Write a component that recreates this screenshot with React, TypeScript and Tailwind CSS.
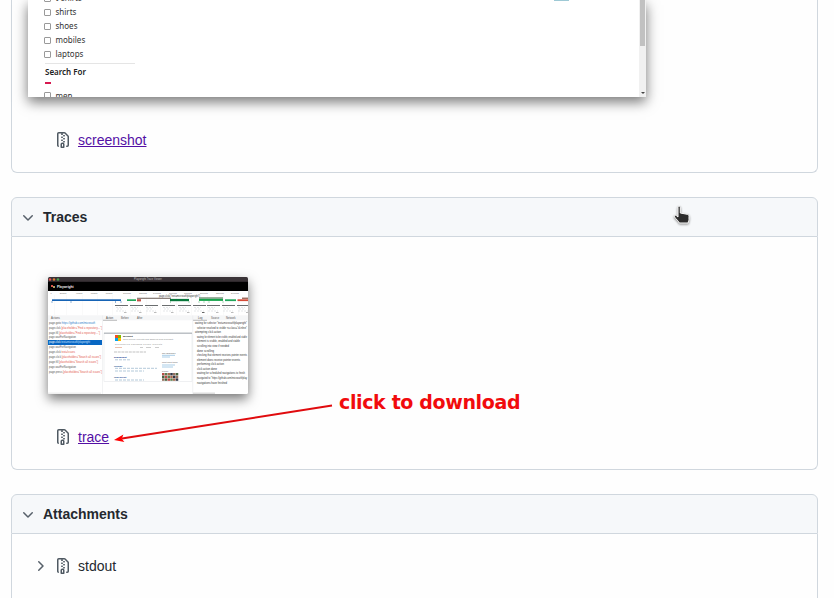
import type { ReactNode } from "react";

function Chevron({ right = false }: { right?: boolean }) {
  return (
    <svg viewBox="0 0 16 16" className="size-4 shrink-0 fill-[#57606a]">
      {right ? (
        <path d="M6.22 3.22a.75.75 0 011.06 0l4.25 4.25a.75.75 0 010 1.06l-4.25 4.25a.75.75 0 01-1.06-1.06L9.94 8 6.22 4.28a.75.75 0 010-1.06z" />
      ) : (
        <path d="M12.78 6.22a.75.75 0 010 1.06l-4.25 4.25a.75.75 0 01-1.06 0L3.22 7.28a.75.75 0 011.06-1.06L8 9.94l3.72-3.72a.75.75 0 011.06 0z" />
      )}
    </svg>
  );
}

function ZipIcon() {
  return (
    <svg viewBox="0 0 16 16" className="size-4 shrink-0 fill-[#4f5962]" fillRule="evenodd">
      <path d="M3.5 1.75a.25.25 0 01.25-.25h3a.75.75 0 000 1.5h.5a.75.75 0 000-1.5h2.086a.25.25 0 01.177.073l2.914 2.914a.25.25 0 01.073.177v8.586a.25.25 0 01-.25.25h-.5a.75.75 0 000 1.5h.5A1.75 1.75 0 0014 13.25V4.664c0-.464-.184-.909-.513-1.237L10.573.513A1.75 1.75 0 009.336 0H3.75A1.75 1.75 0 002 1.75v11.5c0 .649.353 1.214.874 1.515a.75.75 0 10.752-1.298.25.25 0 01-.126-.217V1.75zM8.75 3a.75.75 0 000 1.5h.5a.75.75 0 000-1.5h-.5zM6 5.25a.75.75 0 01.75-.75h.5a.75.75 0 010 1.5h-.5A.75.75 0 016 5.25zm2 1.5A.75.75 0 018.75 6h.5a.75.75 0 010 1.5h-.5A.75.75 0 018 6.75zm-1.25.75a.75.75 0 000 1.5h.5a.75.75 0 000-1.5h-.5zM8 9.75A.75.75 0 018.75 9h.5a.75.75 0 010 1.5h-.5A.75.75 0 018 9.75zm-.75.75a1.75 1.75 0 00-1.75 1.75v3c0 .414.336.75.75.75h2.5a.75.75 0 00.75-.75v-3a1.75 1.75 0 00-1.75-1.75h-.5zM7 12.25a.25.25 0 01.25-.25h.5a.25.25 0 01.25.25v2.25H7v-2.25z" />
    </svg>
  );
}

function CardHeader({ title }: { title: string }) {
  return (
    <div className="flex h-10 items-center gap-[7px] rounded-t-md border border-[#d0d7de] bg-[#f6f8fa] pl-2 font-bold">
      <Chevron />
      {title}
    </div>
  );
}

function FileLink({ children }: { children: ReactNode }) {
  return (
    <div className="flex h-6 items-center gap-[7px] pl-[43px]">
      <ZipIcon />
      <a className="text-[#5410a5] underline">{children}</a>
    </div>
  );
}

function CheckRow({ label }: { label: string }) {
  return (
    <div className="flex h-3.5 items-center gap-[4.5px]">
      <span className="size-[7px] shrink-0 rounded-[1px] border border-[#999]" />
      <span className="text-[8px] leading-[14px] text-[#333]">{label}</span>
    </div>
  );
}

function ShopShot() {
  return (
    <div className="flex h-[97px] w-[618px] justify-between overflow-hidden bg-white font-['Noto_Sans',sans-serif] shadow-[0_5px_12px_0_#777]">
      <div className="-mt-[9px] ml-4 w-[91px]">
        <CheckRow label="t-shirts" />
        <CheckRow label="shirts" />
        <CheckRow label="shoes" />
        <CheckRow label="mobiles" />
        <CheckRow label="laptops" />
        <div className="mt-[2px] ml-px border-t border-[#e5e5e5] pt-[2px] text-[8px] font-semibold leading-3 text-[#222]">
          Search For
        </div>
        <div className="mt-[4px] mb-[4.5px] ml-px h-[2px] w-[6px] bg-[#d71950]" />
        <CheckRow label="men" />
      </div>
      <div className="flex">
        <div className="mr-[70px] h-px w-[15px] bg-[#9ec9d5]" />
        <div className="flex w-[7px] flex-col items-center justify-between bg-[#f1f1f1]">
          <div className="h-[46px] w-[5px] bg-[#c1c1c1]" />
          <div className="mb-[3px] border-x-2 border-t-2 border-x-transparent border-t-[#444]" />
        </div>
      </div>
    </div>
  );
}

const steps = [
  ["page.goto", "https://github.com/microsoft", "#2878c8", 46],
  ["page.click", "[placeholder=\"Find a repository…\"]", "#e45b50", 53],
  ["page.fill", "[placeholder=\"Find a repository…\"]", "#e45b50", 51],
  ["page.waitForNavigation", "", "#555", 27],
  ["page.click", "text=microsoft/playwright", "#c8e0ff", 41],
  ["page.waitForNavigation", "", "#555", 27],
  ["page.click", "text=Issues", "#e45b50", 26],
  ["page.click", "[placeholder=\"Search all issues\"]", "#e45b50", 52],
  ["page.fill", "[placeholder=\"Search all issues\"]", "#e45b50", 49],
  ["page.waitForNavigation", "", "#555", 27],
  ["page.press", "[placeholder=\"Search all issues\"]", "#e45b50", 53],
] as const;

const logs: [string, number, number][] = [
  ["waiting for selector \"text=microsoft/playwright\"", 147, 52],
  ["selector resolved to visible <a class=\"d-inline\"", 149, 50],
  ["attempting click action", 147, 26],
  ["waiting for element to be visible, enabled and stable", 149, 50],
  ["element is visible, enabled and stable", 149, 43],
  ["scrolling into view if needed", 149, 32],
  ["done scrolling", 149, 17],
  ["checking that element receives pointer events", 149, 50],
  ["element does receive pointer events", 149, 43],
  ["performing click action", 149, 27],
  ["click action done", 149, 20],
  ["waiting for scheduled navigations to finish", 149, 48],
  ["navigated to \"https://github.com/microsoft/play", 149, 50],
  ["navigations have finished", 149, 30],
];

const faces = ["#b84c46", "#48633f", "#94705f", "#303747", "#a66a4f", "#5f7e50"];

function TracePreview() {
  return (
    <svg viewBox="0 0 200 117" className="block h-[117px] w-[200px] rounded-[1.5px] bg-white font-['Liberation_Sans',sans-serif] shadow-[0_5px_12px_0_#777]">
      <rect width="200" height="5" fill="#3a3337" />
      <circle cx="2" cy="2.5" r="1.2" fill="#e85454" />
      <circle cx="6" cy="2.5" r="1.2" fill="#dc7b35" />
      <circle cx="10" cy="2.5" r="1.2" fill="#45a34b" />
      <text x="100" y="3.4" fill="#bbb" fontSize="2.6" textAnchor="middle">Playwright Trace Viewer</text>
      <rect y="4.8" width="200" height="9.2" fill="#000" />
      <path d="M3 8h2v2H3z" fill="#d65348" />
      <path d="M5 9h2v2H5z" fill="#a99c62" />
      <text x="9" y="10.5" fill="#eee" fontSize="3.3" fontWeight="bold">Playwright</text>
      {[3, 15, 31, 46, 61, 79, 95, 109, 125, 140, 156, 172, 187].map((x, i) => (
        <g key={x}>
          <text x={x} y="16.7" fontSize="2.2" fill="#666" textAnchor="middle">{i ? `${i * 200}ms` : "0"}</text>
          <rect x={x + 3} y="18" width=".3" height="20" fill="#eee" />
        </g>
      ))}
      <text x="111" y="20" fontSize="2.6" fill="#333" textLength="41" lengthAdjust="spacingAndGlyphs">page.click("text=microsoft/playwright")</text>
      <rect x="4" y="22.3" width="69" height="1.7" fill="#1764b5" />
      <path d="M4 24v2M23 24v2M67.5 24v2M73 24v2" stroke="#4480bd" strokeWidth=".6" />
      <rect x="79" y="22.3" width="9" height="1.7" fill="#24a65a" />
      <rect x="89" y="20.7" width="34" height="1.3" fill="#8d817b" />
      <rect x="89" y="22.2" width="4" height="2.2" fill="#c35045" />
      <rect x="122" y="21.9" width="19" height="2.3" fill="#08773b" />
      <rect x="151" y="20.4" width="24" height="1.2" fill="#607c63" />
      <rect x="151" y="21.8" width="24" height="2.1" fill="#16a34a" />
      <path d="M122.5 24v2M141 24v2M151 24v2M156 24v2M161 24v2M175 24v2" stroke="#5eb27b" strokeWidth=".5" />
      <rect x="177" y="22.3" width="11" height="1.8" fill="#21a55b" />
      <rect x="189.5" y="22.3" width="10.5" height="1.8" fill="#d44a37" />
      <rect x="194" y="20.6" width="6" height="1.3" fill="#946051" />
      {[67, 82, 97, 114, 130, 145, 159, 174, 189].map((x, i) => (
        <g key={x}>
          <rect x={x} y="28.1" width="13" height=".8" fill="#45484b" />
          <path d={`M${x + 1} 30.5h7M${x + 2} 32h5M${x + 1} 34h10`} stroke="#d4d7da" strokeWidth=".6" strokeDasharray="2 1" />
          <rect x={x + 9} y="35" width="2.5" height="1" fill={i === 5 ? "#666" : "#bbb"} />
        </g>
      ))}
      <rect y="38.3" width="200" height="5" fill="#f5f6f7" />
      <text x="3" y="41.7" fontSize="2.7" fill="#555">Actions</text>
      <text x="58" y="41.7" fontSize="2.6" fill="#444">Action</text>
      <text x="73" y="41.7" fontSize="2.6" fill="#555">Before</text>
      <text x="89" y="41.7" fontSize="2.6" fill="#555">After</text>
      <text x="150" y="41.7" fontSize="2.6" fill="#444">Log</text>
      <text x="163" y="41.7" fontSize="2.6" fill="#555">Source</text>
      <text x="178" y="41.7" fontSize="2.6" fill="#555">Network</text>
      <path d="M55 43.3h14M145 43.3h14" stroke="#777" strokeWidth=".5" />
      <path d="M54.5 38.5v78.5M144.7 38.5v78.5" stroke="#e9ebed" strokeWidth=".6" />
      <rect y="63" width="54" height="5" fill="#0867c3" />
      {steps.map(([action, target, color, width], i) => (
        <text key={i} x="1" y={46.6 + i * 4.95} fontSize="2.7" fill={i === 4 ? "#fff" : "#555"} textLength={width} lengthAdjust="spacingAndGlyphs">
          {action} <tspan fill={color}>{target}</tspan>
        </text>
      ))}
      <rect x="56" y="56" width="88" height="48.5" fill="#fff" stroke="#e5e7e9" strokeWidth=".6" />
      <path d="M56 56.2h88" stroke="#808890" strokeWidth=".7" />
      <path d="M67 58h3v3h-3z" fill="#f25022" />
      <path d="M70 58h3v3h-3z" fill="#7fba00" />
      <path d="M67 61h3v3h-3z" fill="#00a4ef" />
      <path d="M70 61h3v3h-3z" fill="#ffb900" />
      <text x="75" y="60" fontSize="2.2" fontWeight="bold" fill="#222">Microsoft</text>
      <text x="75" y="63.4" fontSize="2" fill="#777" textLength="50">Open source projects and samples from Microsoft</text>
      <text x="67" y="67.6" fontSize="2" fill="#777" textLength="47">Repositories  Packages  People  Projects</text>
      <path d="M92 70.5h3M98 70.5h5M107 70.5h4" stroke="#aaa" strokeWidth=".6" />
      <path d="M67 70.5h7" stroke="#df9579" strokeWidth=".6" />
      <path d="M66 75h32" stroke="#999" strokeWidth=".6" strokeDasharray="3 .7" />
      <text x="66" y="81.1" fontSize="2.5" fontWeight="bold" fill="#13398c">playwright</text>
      {[82.8, 91.3, 94, 103].map((y, i) => (
        <path key={y} d={`M67 ${y}h${i === 0 ? 15 : i === 1 ? 42 : 29}`} stroke="#82a4bf" strokeWidth=".6" strokeDasharray="3 1" />
      ))}
      <text x="66" y="89.5" fontSize="2.4" fontWeight="bold" fill="#164d91">vscode</text>
      <text x="66" y="100.5" fontSize="2.4" fontWeight="bold" fill="#164d91">TypeScript</text>
      <text x="114" y="76.5" fontSize="2.1" fill="#555">Top languages</text>
      <path d="M114 78.3h13M114 80h8M114 88h13M114 90h11" stroke="#85b7dd" strokeWidth=".7" />
      <text x="114" y="86.3" fontSize="2.1" fill="#555">Most used topics</text>
      <text x="114" y="95" fontSize="2.1" fill="#555">People</text>
      {Array.from({ length: 18 }, (_, i) => (
        <rect key={i} x={114 + (i % 6) * 2.75} y={96 + Math.floor(i / 6) * 2.7} width="2.5" height="2.4" fill={faces[(i * 5 + Math.floor(i / 6)) % 6]} />
      ))}
      {logs.map(([line, x, width], i) => (
        <text key={i} x={x} y={47.2 + i * 4.57} fontSize="2.7" fill="#333" textLength={width} lengthAdjust="spacingAndGlyphs">{line}</text>
      ))}
      <rect x="145" y="115.5" width="22" height="1.5" fill="#ddd" />
      <rect y="115.5" width="53" height="1.5" fill="#f0f0f0" />
    </svg>
  );
}

export default function App() {
  return (
    <main className="relative h-[598px] w-[834px] overflow-hidden bg-[#fefefe] pl-[11px] font-['Liberation_Sans',Arial,sans-serif] text-sm text-[#24292f]">
      <section className="h-[173px] w-[807px] rounded-b-md border-x border-b border-[#d0d7de]">
        <div className="pl-4">
          <ShopShot />
        </div>
        <div className="pt-[31px]">
          <FileLink>screenshot</FileLink>
        </div>
      </section>

      <section className="mt-6 w-[807px]">
        <CardHeader title="Traces" />
        <div className="h-[233px] rounded-b-md border-x border-b border-[#d0d7de] pt-10">
          <div className="pl-9">
            <TracePreview />
          </div>
          <div className="pt-[31px]">
            <FileLink>trace</FileLink>
          </div>
        </div>
      </section>

      <section className="mt-6 w-[807px]">
        <CardHeader title="Attachments" />
        <div className="flex h-[70px] items-start rounded-b-md border-x border-b border-[#d0d7de] pt-5 pl-5">
          <div className="flex h-6 items-center gap-[7px]">
            <Chevron right />
            <ZipIcon />
            stdout
          </div>
        </div>
      </section>

      <svg viewBox="0 0 220 40" className="absolute top-[402px] left-[113px] h-10 w-[220px]">
        <path d="M9 36.5L219 3.5" stroke="#e00b0e" strokeWidth="2" />
        <path d="M1 38L10.4 32.4 8.8 36.7 11.4 40z" fill="#f00" />
      </svg>
      <div className="absolute top-[390px] left-[339px] font-['DejaVu_Sans',sans-serif] text-[19px] leading-6 font-bold tracking-[-0.36px] whitespace-nowrap text-[#f10b0d]">
        click to download
      </div>
      <svg viewBox="0 0 18 20" className="absolute top-[205px] left-[673px] h-5 w-[18px] drop-shadow-[0_1px_1px_#888]">
        <path d="M5 2.2c0-1.5 2.3-1.5 2.3 0V8l7 1.3c1.3.3 1.7 1 1.7 2v3.3c0 1.1-.8 1.7-.8 3.4H6.3c-.7-2-3-3.5-4.8-6-.8-1.3.6-2.3 1.8-1.4L5 12z" fill="#2d2d2d" stroke="#fff" />
      </svg>
    </main>
  );
}
